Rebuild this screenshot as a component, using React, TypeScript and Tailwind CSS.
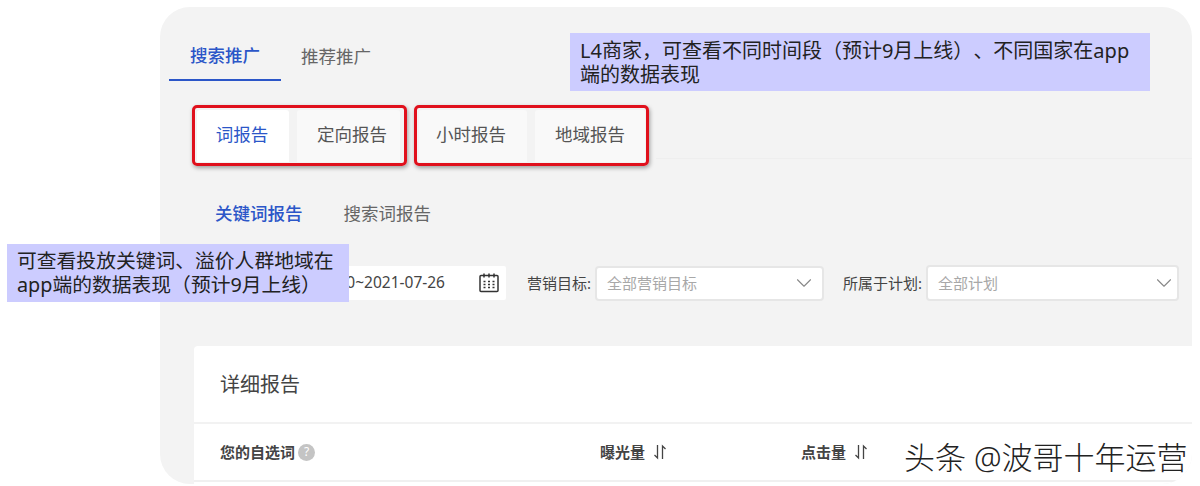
import { ChevronDown } from "lucide-react";

const FONT = { fontFamily: '"Noto Sans", "Noto Sans CJK SC", sans-serif' };

const CalendarIcon = () => (
  <svg width="22" height="22" viewBox="0 0 22 22" fill="none" stroke="#333" strokeWidth="1.5">
    <rect x="2" y="3.5" width="18" height="16" rx="1" />
    <path d="M6 1.5v4M11 1.5v4M16 1.5v4" />
    <path d="M5.5 9.5h2M10 9.5h2M14.5 9.5h2M5.5 12.5h2M10 12.5h2M14.5 12.5h2M5.5 15.5h2M10 15.5h2M14.5 15.5h2" strokeWidth="1.4" />
  </svg>
);

const SortIcon = () => (
  <svg width="14" height="16" viewBox="0 0 14 16" fill="none" stroke="#444" strokeWidth="1.3">
    <path d="M4.5 1v13L1.5 11" />
    <path d="M9.5 15V2l3 3" />
  </svg>
);

const ReportTab = ({ label, active, box }: { label: string; active?: boolean; box: string }) => (
  <div
    className={`flex h-[52px] items-center justify-center rounded-t-[3px] pb-[3px] text-[17.5px] ${box} ${
      active ? "bg-white text-[#2b56c8]" : "bg-[#f9f9f9] text-[#555]"
    }`}
  >
    {label}
  </div>
);

const SelectBox = ({ text, box }: { text: string; box: string }) => (
  <div className={`flex items-center justify-between rounded-[4px] border-2 border-[#e6e6e6] bg-white pl-[10px] ${box}`}>
    <span className="text-[15px] text-[#a8a8a8]">{text}</span>
    <ChevronDown size={26} strokeWidth={1} color="#888" />
  </div>
);

export default function App() {
  return (
    <div className="relative h-[486px] w-[1200px] overflow-hidden bg-white" style={FONT}>
      <div className="pl-[160px] pr-[8px] pt-[7px]">
        <div className="h-[477px] overflow-hidden rounded-[30px] bg-[#f3f3f3]">
          <div className="flex h-[74px] pl-[9px] pt-[13px]">
            <div className="flex h-[61px] w-[112px] items-center justify-center border-b-2 border-[#2b56c8] pt-[12px] text-[17.5px] font-medium text-[#2b56c8]">
              搜索推广
            </div>
            <div className="flex h-[61px] items-center pl-[20px] pt-[12px] text-[17.5px] text-[#666]">推荐推广</div>
          </div>

          <div className="flex h-[85px] gap-[7px] pl-[32px] pt-[24px]">
            <div className="flex h-[61px] w-[215px] gap-[8px] rounded-[5px] border-[3px] border-[#e0101c] pl-[2px] pt-[2px] shadow-[1px_2px_4px_rgba(0,0,0,0.35)]">
              <ReportTab label="词报告" active box="w-[92px] pr-[2px]" />
              <ReportTab label="定向报告" box="w-[103px] pl-[7px]" />
            </div>
            <div className="flex h-[61px] w-[235px] gap-[8px] rounded-[5px] border-[3px] border-[#e0101c] pl-[2px] pt-[2px] shadow-[1px_2px_4px_rgba(0,0,0,0.35)]">
              <ReportTab label="小时报告" box="w-[108px] pr-[4px]" />
              <ReportTab label="地域报告" box="w-[110px]" />
            </div>
            <div className="h-[54px] flex-1 border-b border-[#eeeeee]" />
          </div>

          <div className="mt-[24px] flex h-[48px] items-center gap-[41px] pb-[2px] pl-[55px] text-[17.5px]">
            <span className="font-medium text-[#2b56c8]">关键词报告</span>
            <span className="text-[#666]">搜索词报告</span>
          </div>

          <div className="mt-[27px] flex h-[36px] items-center pl-[100px]">
            <div className="flex h-[34px] w-[246px] items-center justify-end rounded-[2px] bg-white pr-[6px]">
              <span className="text-[15.5px] text-[#444]">0~2021-07-26</span>
              <span className="ml-[33px] flex">
                <CalendarIcon />
              </span>
            </div>
            <span className="ml-[21px] mr-[4px] text-[15px] text-[#444]">营销目标:</span>
            <SelectBox text="全部营销目标" box="h-[35px] w-[229px] pr-[5px]" />
            <span className="ml-[19px] mr-[4px] text-[15px] text-[#444]">所属于计划:</span>
            <SelectBox text="全部计划" box="h-[36px] w-[253px]" />
          </div>

          <div className="ml-[34px] mt-[45px] h-[138px] rounded-tl-[4px] bg-white">
            <div className="flex h-[78px] items-center border-b-2 border-[#f2f2f2] pl-[26px] pt-[2px] text-[20px] text-[#444]">
              详细报告
            </div>
            <div className="flex h-[58px] items-center border-b-2 border-[#f0f0f0] text-[15px] font-bold text-[#444]">
              <div className="flex w-[406px] items-center pl-[26px]">
                您的自选词
                <span className="ml-[3px] flex h-[17px] w-[17px] items-center justify-center rounded-full bg-[#c4c4c4] text-[12px] font-normal text-white">?</span>
              </div>
              <div className="flex w-[201px] items-center gap-[8px]">
                曝光量
                <SortIcon />
              </div>
              <div className="flex items-center gap-[8px]">
                点击量
                <SortIcon />
              </div>
            </div>
          </div>
        </div>
      </div>

      <div className="absolute left-[570px] top-[33px] h-[58px] w-[580px] bg-[#ccccff] pl-[10px] pr-[14px] pt-[6px] text-[20px] leading-[24px] text-[#222]">
        L4商家，可查看不同时间段（预计9月上线）<span className="ml-[10px]">、不同国家在app</span>端的数据表现
      </div>
      <div className="absolute left-[7px] top-[244px] h-[58px] w-[342px] bg-[#ccccff] pl-[10px] pt-[5px] text-[19.8px] leading-[24px] text-[#222]">
        可查看投放关键词、溢价人群地域在
        <br />
        app端的数据表现（预计9月上线）
      </div>
      <div className="absolute left-[904px] top-[437px] text-[31px] font-light leading-[40px] text-[#222] [text-shadow:1px_1px_0_#fff,-1px_0_0_#fff]">
        头条 @波哥十年运营
      </div>
    </div>
  );
}
